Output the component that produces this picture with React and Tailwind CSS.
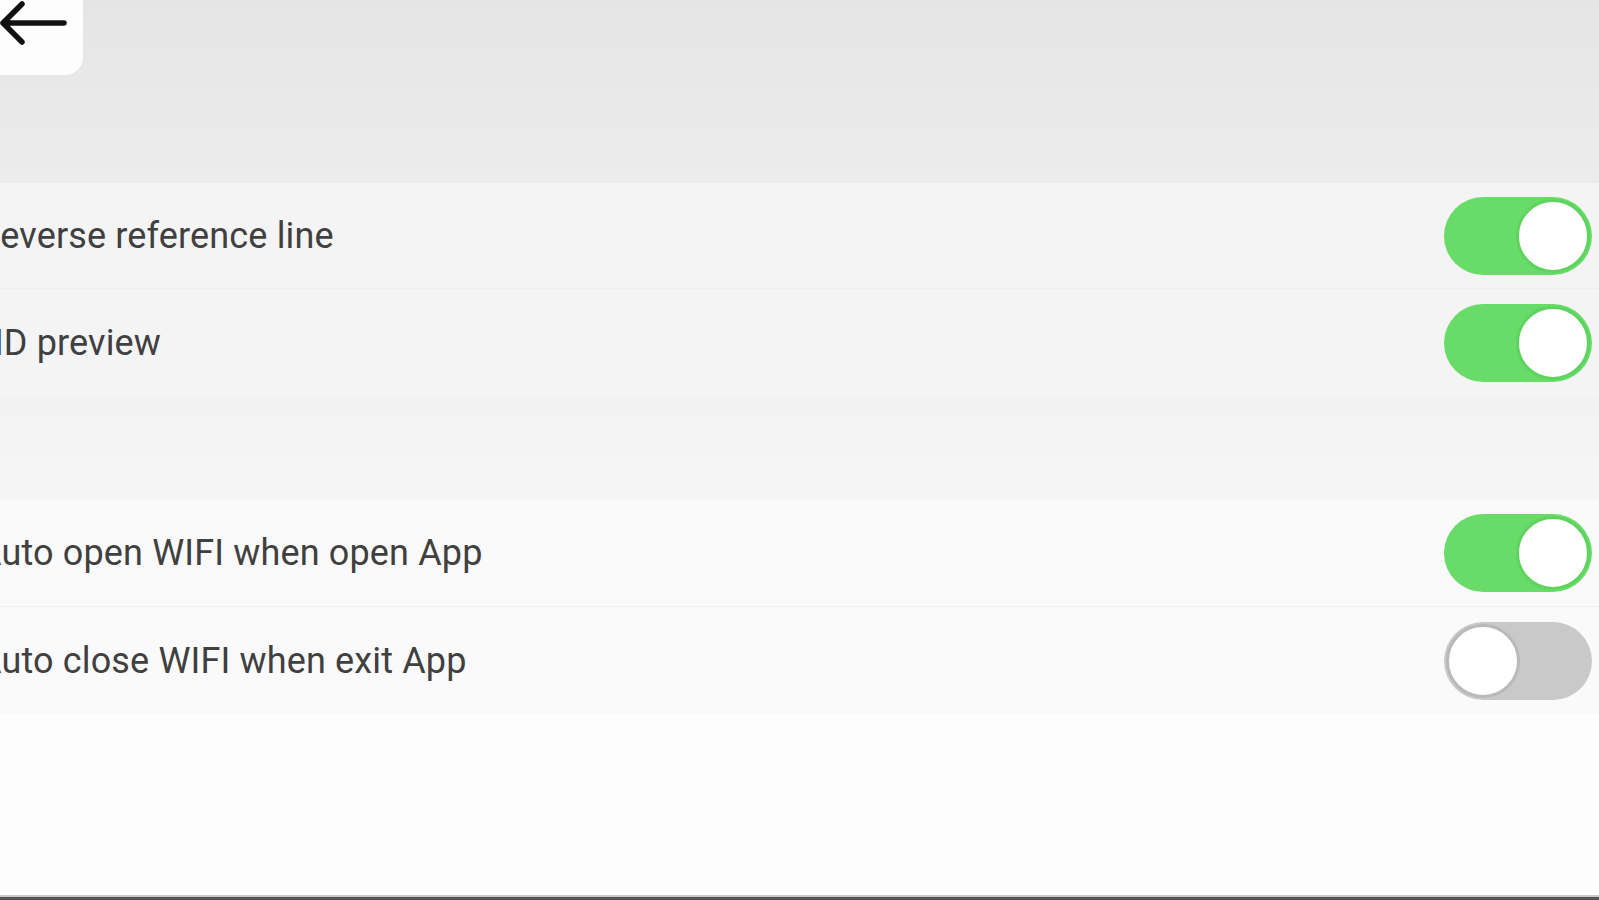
import React from "react";

function Toggle({ on }) {
  return (
    <div
      className={
        on
          ? "flex h-[78px] w-[148px] items-center justify-end rounded-full bg-[#68db68] p-[2px]"
          : "flex h-[78px] w-[148px] items-center justify-start rounded-full bg-[#c9c9c9] p-[2px]"
      }
    >
      <div
        className={
          on
            ? "h-[74px] w-[74px] rounded-full border-[3px] border-[#5ed35e] bg-white"
            : "h-[74px] w-[74px] rounded-full border-[3px] border-[#b9b9b9] bg-white"
        }
      />
    </div>
  );
}

function Row({ label, on, h, divider }) {
  return (
    <div
      className={
        (divider ? "border-b border-[#efefef] " : "") +
        "flex items-center justify-between pr-[7px] " +
        h
      }
    >
      <span
        className="ml-[-22px] text-[36px] leading-none tracking-[0.15px] text-[#404040]"
        style={{ fontFamily: "Roboto, 'Noto Sans', sans-serif" }}
      >
        {label}
      </span>
      <Toggle on={on} />
    </div>
  );
}

export default function App() {
  return (
    <div className="flex h-[900px] w-full flex-col overflow-hidden bg-[#fdfdfd]">
      <div className="h-[183px] bg-gradient-to-b from-[#e5e5e5] to-[#ececec]">
        <div className="flex h-[75px] w-[83px] items-start rounded-br-[18px] bg-[#fdfdfd]">
          <svg width="70" height="48" viewBox="0 0 70 48">
            <path
              d="M64 23 H3 M22 4 L3 23 L22 42"
              fill="none"
              stroke="#111"
              strokeWidth="5.5"
              strokeLinecap="round"
              strokeLinejoin="round"
            />
          </svg>
        </div>
      </div>
      <div className="flex flex-col bg-[#f4f4f4]">
        <Row label="Reverse reference line" on={true} h="h-[106px]" divider />
        <Row label="HD preview" on={true} h="h-[107px]" />
      </div>
      <div className="h-[104px] bg-gradient-to-b from-[#f2f2f2] to-[#f6f6f6]" />
      <div className="flex flex-col bg-[#fafafa]">
        <Row label="Auto open WIFI when open App" on={true} h="h-[107px]" divider />
        <Row label="Auto close WIFI when exit App" on={false} h="h-[107px]" />
      </div>
      <div className="flex-1 bg-[#fdfdfd]" />
      <div className="h-[2px] bg-[#c8c8c8]" />
      <div className="h-[3px] bg-[#555555]" />
    </div>
  );
}
